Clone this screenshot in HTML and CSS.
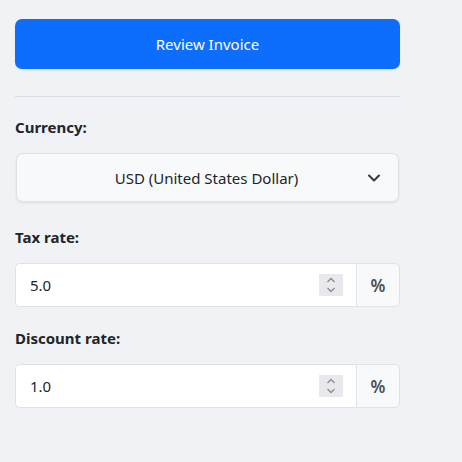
FILE: index.html
```html
<!DOCTYPE html>
<html>
<head>
<meta charset="utf-8">
<link rel="stylesheet" href="styles.css">
</head>
<body>
<div class="panel">
  <button class="btn-primary">Review Invoice</button>
  <hr class="divider">
  <div class="field field-currency">
    <label class="label">Currency:</label>
    <div class="select">
      <span class="select-text">USD (United States Dollar)</span>
      <svg class="chevron" width="14" height="14" viewBox="0 0 14 14"><path d="M2 4.5 L7 9.5 L12 4.5" fill="none" stroke="#343a40" stroke-width="2" stroke-linecap="round" stroke-linejoin="round"/></svg>
    </div>
  </div>
  <div class="field field-tax">
    <label class="label">Tax rate:</label>
    <div class="input-group">
      <div class="input">
        <span class="value">5.0</span>
        <span class="spinner">
          <svg width="24" height="22" viewBox="0 0 24 22"><path d="M8.5 8 L12 4.5 L15.5 8" fill="none" stroke="#8a8a96" stroke-width="1.3"/><path d="M8.5 14 L12 17.5 L15.5 14" fill="none" stroke="#8a8a96" stroke-width="1.3"/></svg>
        </span>
      </div>
      <div class="addon">%</div>
    </div>
  </div>
  <div class="field field-discount">
    <label class="label">Discount rate:</label>
    <div class="input-group">
      <div class="input">
        <span class="value">1.0</span>
        <span class="spinner">
          <svg width="24" height="22" viewBox="0 0 24 22"><path d="M8.5 8 L12 4.5 L15.5 8" fill="none" stroke="#8a8a96" stroke-width="1.3"/><path d="M8.5 14 L12 17.5 L15.5 14" fill="none" stroke="#8a8a96" stroke-width="1.3"/></svg>
        </span>
      </div>
      <div class="addon">%</div>
    </div>
  </div>
</div>
</body>
</html>
```
FILE: styles.css
```css
html, body {
  margin: 0;
  padding: 0;
  background: #f1f2f6;
  font-family: "Noto Sans", "Open Sans", sans-serif;
  color: #212529;
}
.panel {
  width: 385px;
  padding: 19px 0 0 15px;
  display: flex;
  flex-direction: column;
}
.btn-primary {
  height: 50px;
  width: 385px;
  border: none;
  border-radius: 7px;
  background: #0d6efd;
  color: #fff;
  font-family: inherit;
  font-size: 15px;
  box-shadow: 0 1px 2px rgba(0,0,0,0.08);
  padding: 0;
}
.divider {
  border: none;
  border-top: 1px solid #d9dadf;
  margin: 27px 0 0 0;
  height: 0;
}
.field {
  display: flex;
  flex-direction: column;
}
.label {
  font-weight: 700;
  font-size: 15px;
  line-height: 20px;
  margin-bottom: 16px;
}
.field-currency .label { margin-top: 20px; }
.field-tax .label { margin-top: 25px; }
.field-discount .label { margin-top: 21px; }
.select {
  margin-left: 1px;
  width: 381px;
  height: 47px;
  border: 1px solid #dee2e6;
  border-radius: 7px;
  background: #f8f9fa;
  box-shadow: 0 1px 3px rgba(0,0,0,0.08);
  display: flex;
  align-items: center;
  position: relative;
}
.select-text {
  flex: 1;
  text-align: center;
  font-size: 15px;
  padding-right: 2px;
}
.chevron {
  position: absolute;
  right: 17px;
  top: 17px;
}
.input-group {
  display: flex;
  height: 44px;
  width: 385px;
}
.input {
  flex: 1;
  display: flex;
  align-items: center;
  background: #fff;
  border: 1px solid #dee2e6;
  border-right: none;
  border-radius: 5px 0 0 5px;
  padding: 0 13px 0 14px;
}
.value {
  flex: 1;
  font-size: 15px;
}
.spinner {
  width: 24px;
  height: 22px;
  background: #e8e8ed;
  display: flex;
}
.addon {
  width: 42px;
  display: flex;
  align-items: center;
  justify-content: center;
  background: #f8f9fa;
  border: 1px solid #dee2e6;
  border-radius: 0 5px 5px 0;
  font-size: 17px;
  font-weight: 600;
  color: #495057;
}
```
